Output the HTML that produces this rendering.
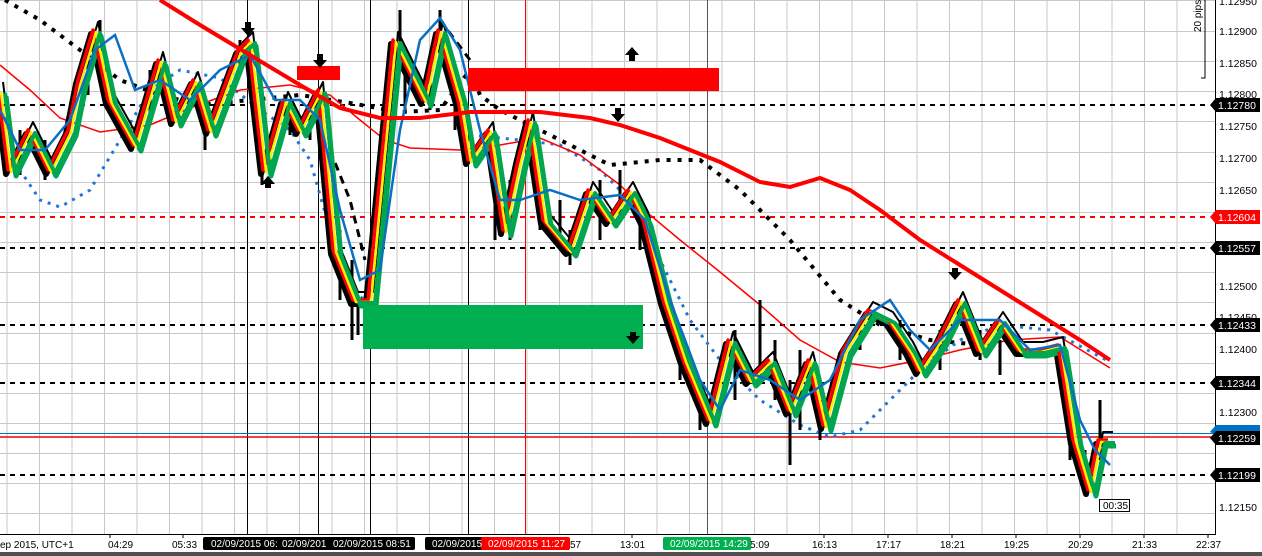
<!DOCTYPE html>
<html><head><meta charset="utf-8"><style>
html,body{margin:0;padding:0;background:#fff;width:1262px;height:556px;overflow:hidden;font-family:"Liberation Sans",sans-serif}
</style></head><body>
<svg width="1262" height="556" xmlns="http://www.w3.org/2000/svg" font-family="Liberation Sans, sans-serif">
<rect width="1262" height="556" fill="#fff"/>
<g stroke="#c8c8c8" stroke-width="1">
<path d="M7 0V534M39.5 0V534M72 0V534M104.5 0V534M137 0V534M169.5 0V534M202 0V534M234.5 0V534M267 0V534M299.5 0V534M332 0V534M364.5 0V534M397 0V534M429.5 0V534M462 0V534M494.5 0V534M527 0V534M559.5 0V534M592 0V534M624.5 0V534M657 0V534M689.5 0V534M722 0V534M754.5 0V534M787 0V534M819.5 0V534M852 0V534M884.5 0V534M917 0V534M949.5 0V534M982 0V534M1014.5 0V534M1047 0V534M1079.5 0V534M1112 0V534M1144.5 0V534M1177 0V534"/>
<path d="M0 0.5H1215M0 31.5H1215M0 61.5H1215M0 91.5H1215M0 121.5H1215M0 152.5H1215M0 182.5H1215M0 212.5H1215M0 242.5H1215M0 272.5H1215M0 302.5H1215M0 333.5H1215M0 363.5H1215M0 393.5H1215M0 423.5H1215M0 453.5H1215M0 483.5H1215M0 513.5H1215"/>
</g>
<g stroke="#000" stroke-width="1">
<path d="M247.5 0V534M318.5 0V534M370.5 0V534M468.5 0V534"/>
</g>
<path d="M525.5 0V534" stroke="#f00"/>
<path d="M707.5 0V534" stroke="#555"/>
<g stroke-width="2" fill="none" stroke-dasharray="5,5">
<path d="M0 105H1210M0 248H1210M0 325H1210M0 383H1210M0 475H1210" stroke="#000"/>
<path d="M0 217H1210" stroke="#f00"/>
</g>
<path d="M0 433.5H1215" stroke="#0070c0"/>
<path d="M0 437H1215" stroke="#e00" stroke-width="1.5"/>
<path d="M5 0 L40 20 L80 50 L120 80 L160 95 L200 105 L250 100 L300 95 L350 103 L400 112 L440 110 L470 70 L480 95 L500 110 L560 140 L610 165 L660 160 L700 160 L740 190 L790 240 L840 300 L880 325 L930 340 L980 345" stroke="#000" stroke-width="4" fill="none" stroke-dasharray="4,7"/>
<path d="M330 150 L350 200 L365 260 M440 20 L470 60" stroke="#000" stroke-width="3" fill="none" stroke-dasharray="8,6"/>
<path d="M0 100 L20 170 L40 200 L60 207 L90 190 L120 140 L150 90 L180 70 L220 78 L260 110 L290 130 L310 160 L330 230 L350 290 L365 300 M470 135 L520 140 L560 145 L600 170 L630 200 L660 260 L690 320 L720 360 L760 400 L800 425 L830 437 L860 430 L890 400 L920 370 L960 340 L1000 325 L1050 330 L1110 362" stroke="#1e78d8" stroke-width="3" fill="none" stroke-dasharray="3,6"/>
<path d="M0 65 L30 90 L60 118 L100 132 L150 125 L190 108 L240 90 L290 85 L330 95 L360 120 L385 140 L410 148 L460 150 L500 145 L540 138 L580 155 L620 185 L650 215 L680 240 L720 272 L760 305 L800 340 L840 362 L880 368 L920 360 L960 350 L1010 340 L1060 337 L1110 368" stroke="#f00" stroke-width="1.5" fill="none"/>
<!-- black noise spikes -->
<g stroke="#000" stroke-width="3">
<path d="M20 130V175M45 140V180M88 40V95M100 20V70M150 70V120M205 110V150M240 40V70M262 150V185M290 100V135M310 105V140M340 230V300M352 260V340M358 300V335M400 10V70M405 50V110M430 60V110M440 10V60M455 80V130M495 160V240M510 180V240M540 190V230M560 200V240M570 230V265M600 180V240M620 170V220M640 200V250M680 330V380M700 380V430M735 330V400M760 300V380M775 340V400M790 380V465M800 350V430M820 400V440M860 330V350M900 320V360M940 330V370M980 330V360M1000 340V375M1070 420V460M1085 450V490M1100 400V460"/>
</g>
<g fill="none" stroke-linejoin="round">
<path id="p" d="M0 90 L10 170 L30 130 L50 170 L70 130 L80 80 L95 30 L110 100 L135 145 L160 60 L175 120 L195 80 L210 130 L240 50 L250 40 L265 170 L285 100 L300 130 L320 90 L335 250 L355 300 L370 300 L395 40 L415 80 L425 100 L440 30 L460 100 L470 160 L490 130 L505 230 L520 160 L530 120 L545 220 L570 250 L590 190 L610 220 L630 190 L645 220 L665 300 L685 360 L710 420 L730 340 L750 380 L770 360 L790 410 L810 360 L825 425 L845 350 L870 310 L890 320 L910 350 L920 370 L940 340 L960 300 L980 350 L1000 320 L1020 350 L1040 350 L1060 345 L1075 440 L1090 490 L1100 440 L1110 440"/>
<use href="#p" stroke="#000" stroke-width="6" transform="translate(-4,4)"/>
<use href="#p" stroke="#000" stroke-width="2" transform="translate(3,-8)"/>
<use href="#p" stroke="#00a650" stroke-width="5" transform="translate(6,6)"/>
<use href="#p" stroke="#f00" stroke-width="3.5" transform="translate(-2,0)"/>
<use href="#p" stroke="#ffee00" stroke-width="2.5" transform="translate(1,2)"/>
<use href="#p" stroke="#00a650" stroke-width="4" transform="translate(5,3)"/>
</g>
<path d="M0 110 L20 150 L45 150 L70 120 L95 50 L115 35 L135 90 L160 80 L190 100 L220 70 L250 55 L275 100 L300 100 L320 120 L340 210 L360 280 L380 270 L400 130 L420 40 L440 18 L460 50 L480 130 L500 200 L520 200 L550 190 L580 200 L620 195 L645 220 L670 300 L700 380 L720 410 L740 370 L770 380 L800 400 L830 380 L860 320 L890 300 L910 330 L930 350 L960 320 L1000 320 L1030 350 L1060 345 L1080 420 L1095 450 L1110 465" stroke="#0b6fc4" stroke-width="2.5" fill="none"/>
<path d="M160 0 L200 25 L250 55 L300 85 L340 108 L380 118 L420 118 L470 112 L540 112 L590 118 L620 125 L660 138 L720 162 L760 182 L790 187 L820 178 L850 190 L880 210 L920 240 L960 265 L1000 290 L1040 315 L1080 340 L1110 360" stroke="#f00" stroke-width="4" fill="none"/>
<rect x="297" y="66" width="43" height="14" fill="#f00"/>
<rect x="468" y="68" width="251" height="23" fill="#f00"/>
<rect x="363" y="305" width="280" height="44" fill="#00b050"/>
<g fill="#000">
<path d="M245 22h6v6h4l-7 8-7-8h4z"/>
<path d="M317 54h6v6h4l-7 8-7-8h4z"/>
<path d="M615 108h6v6h4l-7 8-7-8h4z"/>
<path d="M630 332h6v4h4l-7 8-7-8h4z"/>
<path d="M952 268h6v4h4l-7 8-7-8h4z"/>
<path d="M632 47l7 8h-4v6h-6v-6h-4z"/>
<path d="M268 176l7 8h-4v4h-6v-4h-4z"/>
</g>
<path d="M1215.5 0V535M0 534.5H1216" stroke="#000"/>
<g font-size="10.5" fill="#000">
<text x="1219" y="5">1.12950</text>
<text x="1219" y="35">1.12900</text>
<text x="1219" y="67">1.12850</text>
<text x="1219" y="98">1.12800</text>
<text x="1219" y="130">1.12750</text>
<text x="1219" y="162">1.12700</text>
<text x="1219" y="194">1.12650</text>
<text x="1219" y="290">1.12500</text>
<text x="1219" y="321">1.12450</text>
<text x="1219" y="353">1.12400</text>
<text x="1219" y="416">1.12300</text>
<text x="1219" y="511">1.12150</text>
</g>
<g font-size="10.5">
<path d="M1210 105l6-7h44v14h-44z" fill="#000"/><text x="1218" y="109" fill="#fff">1.12780</text>
<path d="M1210 217l6-7h44v14h-44z" fill="#f00"/><text x="1218" y="221" fill="#fff">1.12604</text>
<path d="M1210 248l6-7h44v14h-44z" fill="#000"/><text x="1218" y="252" fill="#fff">1.12557</text>
<path d="M1210 325l6-7h44v14h-44z" fill="#000"/><text x="1218" y="329" fill="#fff">1.12433</text>
<path d="M1210 383l6-7h44v14h-44z" fill="#000"/><text x="1218" y="387" fill="#fff">1.12344</text>
<path d="M1210 432l6-7h44v10h-44z" fill="#0070c0"/>
<path d="M1210 438l6-7h44v14h-44z" fill="#000"/><text x="1218" y="442" fill="#fff">1.12259</text>
<path d="M1210 475l6-7h44v14h-44z" fill="#000"/><text x="1218" y="479" fill="#fff">1.12199</text>
</g>
<path d="M1205 0V78h-4" stroke="#000" fill="none"/>
<text transform="translate(1201,32) rotate(-90)" font-size="10" fill="#000">20 pips</text>
<g font-size="10" fill="#000">
<path d="M110 534v4M183 534v4M632 534v4M824 534v4M888 534v4M952 534v4M1016 534v4M1080 534v4M1144 534v4M1208 534v4" stroke="#000"/>
<text x="0" y="548">ep 2015, UTC+1</text>
<text x="108" y="548">04:29</text>
<text x="172" y="548">05:33</text>
<text x="620" y="548">13:01</text>
<text x="570" y="548">57</text>
<text x="750" y="548">5:09</text>
<text x="812" y="548">16:13</text>
<text x="876" y="548">17:17</text>
<text x="940" y="548">18:21</text>
<text x="1004" y="548">19:25</text>
<text x="1068" y="548">20:29</text>
<text x="1132" y="548">21:33</text>
<text x="1196" y="548">22:37</text>
</g>
<rect x="203" y="537" width="212" height="13" rx="2" fill="#000"/>
<rect x="425" y="537" width="60" height="13" rx="2" fill="#000"/>
<rect x="481" y="537" width="89" height="13" rx="2" fill="#f00"/>
<rect x="663" y="537" width="88" height="13" rx="2" fill="#00b050"/>
<g font-size="10" fill="#fff">
<text x="211" y="547">02/09/2015 06:</text>
<text x="282" y="547">02/09/201</text>
<text x="333" y="547">02/09/2015 08:51</text>
<text x="432" y="547">02/09/2015</text>
<text x="488" y="547">02/09/2015 11:27</text>
<text x="670" y="547">02/09/2015 14:29</text>
</g>
<rect x="1099.5" y="499.5" width="30" height="12" fill="#fff" stroke="#000"/>
<text x="1103" y="509" font-size="10">00:35</text>
<rect x="0" y="552" width="1262" height="4" fill="#505050"/>
</svg>
</body></html>
